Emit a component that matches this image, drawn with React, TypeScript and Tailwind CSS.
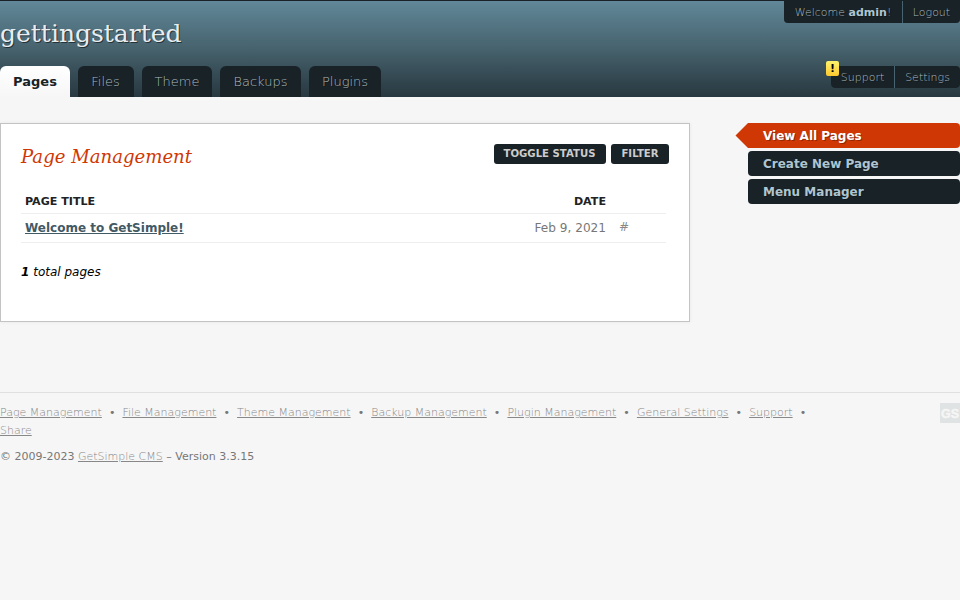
import React from "react";

const SHADOW = "[text-shadow:1px_1px_0_rgba(0,0,0,0.3)]";

const tabs = [
  { label: "Files", width: "w-[56px] pr-px" },
  { label: "Theme", width: "w-[70px]" },
  { label: "Backups", width: "w-[81px]" },
  { label: "Plugins", width: "w-[72px]" },
];

const footerLinks = [
  "Page Management",
  "File Management",
  "Theme Management",
  "Backup Management",
  "Plugin Management",
  "General Settings",
  "Support",
];

function Header() {
  return (
    <header className="flex h-[97px] justify-between border-t border-[#182227] bg-linear-to-b from-[#618899] via-[#46626d] via-50% to-[#283840]">
      <div className="flex flex-col justify-between">
        <h1 className="mt-[18px] font-['DejaVu_Serif',serif] text-[25px] leading-[30px] text-[#e8edf0] [text-shadow:1px_1px_0_rgba(0,0,0,0.5)]">
          gettingstarted
        </h1>
        <nav className="flex gap-2 text-[13px] leading-[31px]">
          <a className="h-[31px] w-[70px] rounded-t-md bg-linear-to-b from-white to-[#f6f6f6] text-center font-bold text-[#182227]">
            Pages
          </a>
          {tabs.map((tab) => (
            <a
              key={tab.label}
              className={`h-[31px] rounded-t-md bg-[#182227] text-center font-extralight text-[#a9b7bd] ${SHADOW} ${tab.width}`}
            >
              {tab.label}
            </a>
          ))}
        </nav>
      </div>
      <div className={`flex flex-col items-end justify-between pb-[9px] text-[11px] leading-[24px] font-extralight text-[#a9b7bd] ${SHADOW}`}>
        <div className="flex h-[22px] gap-px rounded-b bg-[#486370]">
          <span className="w-[118px] rounded-bl bg-[#182227] text-center">
            Welcome <strong className="font-bold text-[#afc5cf]">admin</strong>!
          </span>
          <span className="w-[57px] rounded-br bg-[#182227] text-center">Logout</span>
        </div>
        <div className="relative flex h-[22px] gap-px rounded bg-[#486370]">
          <span className="absolute -top-[5px] -left-[5px] h-[15px] w-[13px] rounded-[2px] bg-linear-to-b from-[#fff36b] to-[#ffc82c] text-center text-[11px] leading-[15px] font-bold text-black [text-shadow:none]">
            !
          </span>
          <span className="w-[63px] rounded-l bg-[#182227] text-center">Support</span>
          <span className="w-[65px] rounded-r bg-[#182227] text-center">Settings</span>
        </div>
      </div>
    </header>
  );
}

function PagePanel() {
  return (
    <section className="h-[199px] w-[690px] border border-[#c3c3c3] bg-white px-5 pt-5 shadow-[0_0_4px_rgba(0,0,0,0.06)]">
      <div className="flex justify-between">
        <h2 className="font-['DejaVu_Serif',serif] text-[18.1px] leading-[25px] text-[#cf3805] italic">
          Page Management
        </h2>
        <div className="flex h-5 gap-[5px] text-[10.15px] leading-[19px] font-bold text-[#cccccc]">
          <span className="w-[112px] rounded-[3px] bg-[#182227] pr-px text-center">TOGGLE STATUS</span>
          <span className="w-[58px] rounded-[3px] bg-[#182227] text-center">FILTER</span>
        </div>
      </div>
      <div className="mt-[20px] w-[645px]">
        <div className="flex h-[25px] border-b border-[#eeeeee] pl-1 text-[11.1px] leading-[26px] font-bold text-[#222222]">
          <span className="w-[400px]">PAGE TITLE</span>
          <span className="w-[181px] text-right">DATE</span>
        </div>
        <div className="flex h-[29px] border-b border-[#eeeeee] pl-1 text-[12px] leading-[28px] text-[#777777]">
          <a className="w-[400px] font-bold text-[#415a66] underline">Welcome to GetSimple!</a>
          <span className="w-[181px] text-right text-[12.1px]">Feb 9, 2021</span>
          <span className="ml-[13px] text-[12px] leading-[26px] text-[#888888]">#</span>
        </div>
      </div>
      <p className="mt-[20px] text-[12px] leading-[18px] text-black italic">
        <b>1</b> total pages
      </p>
    </section>
  );
}

function Sidebar() {
  return (
    <aside className={`flex w-[225px] flex-col items-end gap-[3px] text-[12px] leading-[26px] font-bold text-[#afc5cf] ${SHADOW}`}>
      <div className="flex h-[25px]">
        <svg width="13" height="25" viewBox="0 0 13 25">
          <path d="M13 0L0.5 12.5L13 25Z" fill="#cf3805" />
        </svg>
        <span className="w-[212px] rounded-r bg-[#cf3805] pl-[15px] text-white">View All Pages</span>
      </div>
      <span className="h-[25px] w-[212px] rounded bg-[#182227] pl-[15px]">Create New Page</span>
      <span className="h-[25px] w-[212px] rounded bg-[#182227] pl-[15px]">Menu Manager</span>
    </aside>
  );
}

function Footer() {
  return (
    <footer className="mt-[70px] flex justify-between border-t border-[#e0e0e0] pt-[10px] text-[11px] leading-[18px] text-[#777777]">
      <div className="w-[830px] pt-px">
        <p>
          {footerLinks.map((label) => (
            <React.Fragment key={label}>
              <a className="font-extralight whitespace-nowrap text-[#888888] underline">{label}</a>
              <span className="tracking-[0.03px]">{"\u00a0 • \u00a0"}</span>
            </React.Fragment>
          ))}
          <br />
          <a className="font-extralight text-[#888888] underline">Share</a>
        </p>
        <p className="mt-2">
          © 2009-2023 <a className="font-extralight text-[#888888] underline">GetSimple CMS</a> – Version 3.3.15
        </p>
      </div>
      <svg width="20" height="20" viewBox="0 0 20 20">
        <rect width="20" height="20" fill="#e0e3e3" />
        <text
          x="10"
          y="14.8"
          textAnchor="middle"
          className="fill-[#f6f6f6] stroke-[#f6f6f6] font-['Liberation_Sans',sans-serif] text-[12.5px] font-bold"
          strokeWidth="0.4"
        >
          GS
        </text>
      </svg>
    </footer>
  );
}

export default function App() {
  return (
    <div className="h-[600px] w-[960px] overflow-hidden bg-[#f6f6f6] font-['DejaVu_Sans',sans-serif]">
      <Header />
      <main className="mt-[26px] flex justify-between">
        <PagePanel />
        <Sidebar />
      </main>
      <Footer />
    </div>
  );
}
